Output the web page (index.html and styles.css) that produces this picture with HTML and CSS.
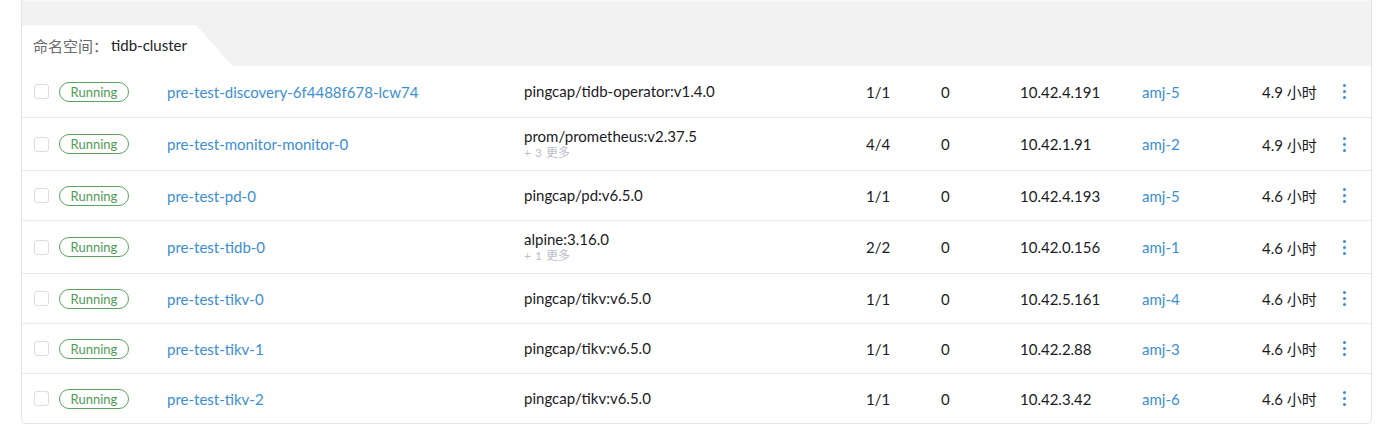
FILE: index.html
```html
<!DOCTYPE html>
<html>
<head>
<meta charset="utf-8">
<link rel="stylesheet" href="styles.css">
</head>
<body>
<div class="panel">
  <div class="head">
    <div class="tab"><span class="lbl">命名空间：</span><span class="ns">tidb-cluster</span></div>
  </div>
  <div class="row r51">
    <span class="cb"></span><span class="badge">Running</span>
    <a class="name">pre-test-discovery-6f4488f678-lcw74</a>
    <div class="img"><div>pingcap/tidb-operator:v1.4.0</div></div>
    <span>1/1</span><span>0</span><span>10.42.4.191</span><a class="node">amj-5</a><span>4.9 小时</span>
    <span class="kebab"><i></i><i></i><i></i></span>
  </div>
  <div class="row r53">
    <span class="cb"></span><span class="badge">Running</span>
    <a class="name">pre-test-monitor-monitor-0</a>
    <div class="img"><div>prom/prometheus:v2.37.5</div><div class="more">+ 3 更多</div></div>
    <span>4/4</span><span>0</span><span>10.42.1.91</span><a class="node">amj-2</a><span>4.9 小时</span>
    <span class="kebab"><i></i><i></i><i></i></span>
  </div>
  <div class="row r50">
    <span class="cb"></span><span class="badge">Running</span>
    <a class="name">pre-test-pd-0</a>
    <div class="img"><div>pingcap/pd:v6.5.0</div></div>
    <span>1/1</span><span>0</span><span>10.42.4.193</span><a class="node">amj-5</a><span>4.6 小时</span>
    <span class="kebab"><i></i><i></i><i></i></span>
  </div>
  <div class="row r53">
    <span class="cb"></span><span class="badge">Running</span>
    <a class="name">pre-test-tidb-0</a>
    <div class="img"><div>alpine:3.16.0</div><div class="more">+ 1 更多</div></div>
    <span>2/2</span><span>0</span><span>10.42.0.156</span><a class="node">amj-1</a><span>4.6 小时</span>
    <span class="kebab"><i></i><i></i><i></i></span>
  </div>
  <div class="row r50">
    <span class="cb"></span><span class="badge">Running</span>
    <a class="name">pre-test-tikv-0</a>
    <div class="img"><div>pingcap/tikv:v6.5.0</div></div>
    <span>1/1</span><span>0</span><span>10.42.5.161</span><a class="node">amj-4</a><span>4.6 小时</span>
    <span class="kebab"><i></i><i></i><i></i></span>
  </div>
  <div class="row r50">
    <span class="cb"></span><span class="badge">Running</span>
    <a class="name">pre-test-tikv-1</a>
    <div class="img"><div>pingcap/tikv:v6.5.0</div></div>
    <span>1/1</span><span>0</span><span>10.42.2.88</span><a class="node">amj-3</a><span>4.6 小时</span>
    <span class="kebab"><i></i><i></i><i></i></span>
  </div>
  <div class="row r50 last">
    <span class="cb"></span><span class="badge">Running</span>
    <a class="name">pre-test-tikv-2</a>
    <div class="img"><div>pingcap/tikv:v6.5.0</div></div>
    <span>1/1</span><span>0</span><span>10.42.3.42</span><a class="node">amj-6</a><span>4.6 小时</span>
    <span class="kebab"><i></i><i></i><i></i></span>
  </div>
</div>
</body>
</html>
```

FILE: styles.css
```css
html, body {
  margin: 0;
  padding: 0;
  background: #ffffff;
}
body {
  font-family: Lato, "Noto Sans CJK SC", sans-serif;
  font-size: 15px;
  color: #1b1b24;
}
.panel {
  margin-left: 21px;
  width: 1349px;
  border: 1px solid #e4e4ec;
  border-top: none;
  border-radius: 0 0 5px 5px;
  overflow: hidden;
}
.head {
  background: #f2f2f2;
  height: 66px;
  box-sizing: border-box;
  padding-top: 24px;
  border-top: 1px solid #f7f7f7;
}
.tab {
  width: 211px;
  height: 42px;
  background: #ffffff;
  border-top-left-radius: 4px;
  clip-path: polygon(0 0, 174px 0, 100% 100%, 0 100%);
  box-sizing: border-box;
  padding-left: 11px;
  display: flex;
  align-items: center;
  padding-bottom: 2px;
}
.lbl { color: #6a6a6a; }
.ns { color: #222; margin-left: 3px; }
.row {
  display: grid;
  grid-template-columns: 25px 108px 357px 342px 75px 79px 122px 120px 76px 1fr;
  align-items: center;
  padding-left: 12px;
  border-bottom: 1px solid #e8e8ef;
}
.row.last { border-bottom: none; }
.r50 { height: 49px; }
.r51 { height: 51px; }
.r53 { height: 52px; }
.cb {
  width: 13px;
  height: 13px;
  border: 1px solid #dddde5;
  border-radius: 3px;
  box-sizing: content-box;
}
.badge {
  width: 70px;
  height: 20px;
  box-sizing: border-box;
  border: 1px solid #5ba25f;
  border-radius: 10px;
  color: #4f9a53;
  font-size: 13px;
  display: flex;
  align-items: center;
  justify-content: center;
}
.name, .node {
  color: #3b8ed4;
  text-decoration: none;
}
.img { line-height: 17px; }
.more {
  color: #bdbdcc;
  font-size: 12px;
  line-height: 16px;
  word-spacing: 1px;
}
.kebab {
  display: flex;
  flex-direction: column;
  gap: 3px;
  padding-left: 5px;
}
.kebab i {
  display: block;
  width: 3px;
  height: 3px;
  border-radius: 50%;
  background: #3b8ed4;
}
```
